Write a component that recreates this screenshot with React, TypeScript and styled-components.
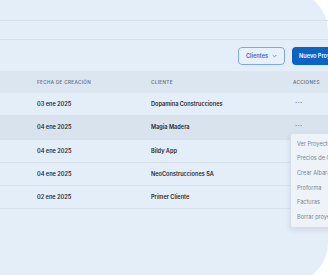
import React from "react";
import styled, { createGlobalStyle } from "styled-components";

const Global = createGlobalStyle`
  html, body { margin: 0; padding: 0; background: #ffffff; overflow: hidden; }
  body { font-family: Inter, "Noto Sans", sans-serif; -webkit-font-smoothing: antialiased; }
  * { box-sizing: border-box; }
`;

const Panel = styled.div`
  width: 328px;
  height: 292px;
  margin-top: -9px;
  background: #e4eef8;
  border-radius: 0 40px 40px 0;
  display: flex;
  flex-direction: column;
`;

const TopBar = styled.div`
  height: 30px;
  border-bottom: 1px solid #d4e0ec;
  flex-shrink: 0;
`;

const SubBar = styled.div`
  height: 19px;
  border-bottom: 1px solid #d4e0ec;
  flex-shrink: 0;
`;

const Toolbar = styled.div`
  display: flex;
  align-items: center;
  gap: 7px;
  padding: 6px 0 6px 238px;
  height: 31px;
  flex-shrink: 0;
`;

const OutlineButton = styled.button`
  height: 18px;
  width: 47px;
  border: 1px solid #7fa8e4;
  background: #e8f1fb;
  border-radius: 4px;
  color: #2f6bd3;
  font-family: Inter, sans-serif;
  font-size: 5.6px;
  font-weight: 600;
  display: flex;
  align-items: center;
  justify-content: center;
  gap: 4px;
  padding: 0;
  flex-shrink: 0;
`;

const PrimaryButton = styled.button`
  height: 18px;
  width: 70px;
  border: none;
  background: #0b63c4;
  border-radius: 4px;
  color: #ffffff;
  font-family: Inter, sans-serif;
  font-size: 5.6px;
  font-weight: 600;
  padding: 0 0 0 7px;
  text-align: left;
  white-space: nowrap;
  flex-shrink: 0;
`;

const Row = styled.div<{ $head?: boolean; $active?: boolean }>`
  display: grid;
  grid-template-columns: 114px 142px 60px;
  align-items: center;
  padding-left: 37px;
  height: ${(p) => (p.$head ? "22px" : "23.3px")};
  background: ${(p) => (p.$head ? "#dce6f0" : p.$active ? "#d9e3ed" : "transparent")};
  border-bottom: ${(p) => (p.$head ? "none" : "1px solid #d6e1ec")};
  flex-shrink: 0;
  position: relative;
`;

const HeadCell = styled.div`
  font-size: 4.6px;
  font-weight: 600;
  letter-spacing: 0.35px;
  color: #6c7887;
  text-transform: uppercase;
  white-space: nowrap;
`;

const Cell = styled.div`
  font-size: 5.6px;
  font-weight: 600;
  color: #1f2630;
  white-space: nowrap;
`;

const Dots = styled.div`
  font-size: 7px;
  font-weight: 700;
  color: #7f8a98;
  letter-spacing: 0.1px;
  padding-left: 2px;
  line-height: 1;
  margin-top: -3px;
`;

const Menu = styled.div`
  position: absolute;
  left: 290px;
  top: 17px;
  width: 60px;
  height: 95px;
  background: #edf3f9;
  border: 1px solid #d6e0ea;
  border-radius: 3px;
  box-shadow: 0 2px 5px rgba(40, 60, 90, 0.12);
  padding: 2px 0 0 6px;
  display: flex;
  flex-direction: column;
  z-index: 2;
`;

const MenuItem = styled.div`
  height: 14.7px;
  display: flex;
  align-items: center;
  font-size: 5.6px;
  color: #7b8695;
  white-space: nowrap;
`;

const rows = [
  { date: "03 ene 2025", client: "Dopamina Construcciones", dots: true },
  { date: "04 ene 2025", client: "Magia Madera", dots: true, active: true },
  { date: "04 ene 2025", client: "Bildy App" },
  { date: "04 ene 2025", client: "NeoConstrucciones SA" },
  { date: "02 ene 2025", client: "Primer Cliente" },
];

const menuItems = [
  "Ver Proyecto",
  "Precios de Cliente",
  "Crear Albarán",
  "Proforma",
  "Facturas",
  "Borrar proyecto",
];

export default function App() {
  return (
    <>
      <Global />
      <Panel>
        <TopBar />
        <SubBar />
        <Toolbar>
          <OutlineButton>
            Clientes
            <svg width="5" height="4" viewBox="0 0 5 4" fill="none">
              <path d="M0.6 1 L2.5 2.9 L4.4 1" stroke="#2f6bd3" strokeWidth="0.7" />
            </svg>
          </OutlineButton>
          <PrimaryButton>Nuevo Proyecto</PrimaryButton>
        </Toolbar>
        <Row $head>
          <HeadCell>Fecha de creación</HeadCell>
          <HeadCell>Cliente</HeadCell>
          <HeadCell>Acciones</HeadCell>
        </Row>
        {rows.map((r, i) => (
          <Row key={i} $active={r.active}>
            <Cell>{r.date}</Cell>
            <Cell>{r.client}</Cell>
            <Dots>{r.dots ? "···" : ""}</Dots>
            {r.active && (
              <Menu>
                {menuItems.map((m) => (
                  <MenuItem key={m}>{m}</MenuItem>
                ))}
              </Menu>
            )}
          </Row>
        ))}
      </Panel>
    </>
  );
}
